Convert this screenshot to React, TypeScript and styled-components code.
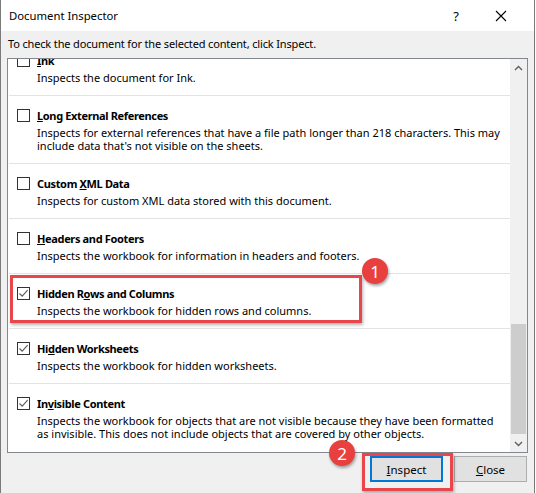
import React from 'react';
import styled, { createGlobalStyle } from 'styled-components';

const GlobalStyle = createGlobalStyle`
  html, body {
    margin: 0;
    padding: 0;
    background: #ffffff;
  }
  body {
    font-family: "Noto Sans", "DejaVu Sans", sans-serif;
    font-size: 11px;
    color: #000;
  }
`;

type InspectItem = {
  title: string;
  mnemonic: number;
  lines: string[];
  checked: boolean;
};

const items: InspectItem[] = [
  { title: 'Ink', mnemonic: 0, lines: ['Inspects the document for Ink.'], checked: false },
  {
    title: 'Long External References',
    mnemonic: 0,
    lines: [
      'Inspects for external references that have a file path longer than 218 characters. This may',
      "include data that's not visible on the sheets.",
    ],
    checked: false,
  },
  { title: 'Custom XML Data', mnemonic: 7, lines: ['Inspects for custom XML data stored with this document.'], checked: false },
  { title: 'Headers and Footers', mnemonic: 0, lines: ['Inspects the workbook for information in headers and footers.'], checked: false },
  { title: 'Hidden Rows and Columns', mnemonic: 8, lines: ['Inspects the workbook for hidden rows and columns.'], checked: true },
  { title: 'Hidden Worksheets', mnemonic: 2, lines: ['Inspects the workbook for hidden worksheets.'], checked: true },
  {
    title: 'Invisible Content',
    mnemonic: 2,
    lines: [
      'Inspects the workbook for objects that are not visible because they have been formatted',
      'as invisible. This does not include objects that are covered by other objects.',
    ],
    checked: true,
  },
];

const Mnemonic: React.FC<{ text: string; at: number }> = ({ text, at }) => (
  <>
    {text.slice(0, at)}
    <u>{text.charAt(at)}</u>
    {text.slice(at + 1)}
  </>
);

const App: React.FC = () => {
  return (
    <>
      <GlobalStyle />
      <Window>
        <TitleBar>
          <TitleText>Document Inspector</TitleText>
          <TitleButtons>
            <HelpGlyph>?</HelpGlyph>
            <svg width="12" height="12" viewBox="0 0 12 12">
              <path d="M1 1 L11 11 M11 1 L1 11" stroke="#000" strokeWidth="1.1" fill="none" />
            </svg>
          </TitleButtons>
        </TitleBar>
        <Body>
          <Hint>To check the document for the selected content, click Inspect.</Hint>
          <ListBox>
            <ListViewport>
              <ListContent>
                {items.map((item, i) => (
                  <Row key={item.title} $last={i === items.length - 1}>
                    <TitleLine>
                      <CheckBox>
                        {item.checked && (
                          <svg width="11" height="11" viewBox="0 0 11 11">
                            <path d="M1.5 5.5 L4.2 8.2 L9.6 2.2" stroke="#5e5e5e" strokeWidth="1.2" fill="none" />
                          </svg>
                        )}
                      </CheckBox>
                      <ItemTitle>
                        <Mnemonic text={item.title} at={item.mnemonic} />
                      </ItemTitle>
                    </TitleLine>
                    <Desc>
                      {item.lines.map((l) => (
                        <div key={l}>{l}</div>
                      ))}
                    </Desc>
                  </Row>
                ))}
              </ListContent>
            </ListViewport>
            <ScrollBar>
              <ArrowBox>
                <svg width="9" height="6" viewBox="0 0 9 6">
                  <path d="M1 5 L4.5 1.5 L8 5" stroke="#606060" strokeWidth="1.4" fill="none" />
                </svg>
              </ArrowBox>
              <Track>
                <Thumb />
              </Track>
              <ArrowBox>
                <svg width="9" height="6" viewBox="0 0 9 6">
                  <path d="M1 1 L4.5 4.5 L8 1" stroke="#606060" strokeWidth="1.4" fill="none" />
                </svg>
              </ArrowBox>
            </ScrollBar>
          </ListBox>
          <Footer>
            <Button $focused>
              <u>I</u>nspect
            </Button>
            <Button>
              <u>C</u>lose
            </Button>
          </Footer>
        </Body>

        <Highlight $x={9} $y={275} $w={352} $h={48} />
        <Badge $x={361} $y={258}>1</Badge>
        <Highlight $x={361} $y={453} $w={91} $h={38} />
        <Badge $x={328} $y={440}>2</Badge>
      </Window>
    </>
  );
};

export default App;

const Window = styled.div`
  position: relative;
  width: 535px;
  height: 493px;
  box-sizing: border-box;
  border-left: 1px solid #7a7a7a;
  border-right: 1px solid #7a7a7a;
  background: #f0f0f0;
  overflow: hidden;
`;

const TitleBar = styled.div`
  height: 31px;
  background: #ffffff;
  display: flex;
  align-items: center;
  justify-content: space-between;
  padding: 0 27px 0 8px;
`;

const TitleText = styled.div`
  font-size: 11.3px;
  padding-bottom: 1px;
`;

const TitleButtons = styled.div`
  display: flex;
  align-items: center;
  gap: 36px;
`;

const HelpGlyph = styled.span`
  font-size: 13px;
`;

const Body = styled.div`
  padding: 5px 6px 0 6px;
`;

const Hint = styled.div`
  line-height: 16px;
  padding-left: 1px;
  letter-spacing: -0.15px;
`;

const ListBox = styled.div`
  margin-top: 6px;
  height: 395px;
  box-sizing: border-box;
  border: 1px solid #828790;
  background: #ffffff;
  display: flex;
`;

const ListViewport = styled.div`
  flex: 1;
  overflow: hidden;
`;

const ListContent = styled.div`
  margin-top: -18px;
`;

const Row = styled.div<{ $last?: boolean }>`
  margin: 0 0 0 1px;
  padding: 11px 0 11px 0;
  border-bottom: ${(p) => (p.$last ? 'none' : '1px solid #e3e3e3')};
`;

const TitleLine = styled.div`
  display: flex;
  align-items: center;
  height: 16px;
  padding-left: 8px;
`;

const CheckBox = styled.div`
  width: 13px;
  height: 13px;
  box-sizing: border-box;
  border: 1px solid #333333;
  background: #ffffff;
  display: flex;
  align-items: center;
  justify-content: center;
  margin-right: 7px;
`;

const ItemTitle = styled.div`
  font-weight: 700;
  font-size: 11px;
  letter-spacing: -0.35px;
`;

const Desc = styled.div`
  margin-top: 3px;
  padding-left: 28px;
  line-height: 13px;
  white-space: nowrap;
`;

const ScrollBar = styled.div`
  width: 17px;
  background: #f0f0f0;
  display: flex;
  flex-direction: column;
`;

const ArrowBox = styled.div`
  height: 17px;
  display: flex;
  align-items: center;
  justify-content: center;
`;

const Track = styled.div`
  flex: 1;
  display: flex;
  flex-direction: column;
  justify-content: flex-end;
  padding: 0 1px 0 1px;
`;

const Thumb = styled.div`
  height: 110px;
  background: #cdcdcd;
  margin-bottom: 1px;
`;

const Footer = styled.div`
  display: flex;
  justify-content: flex-end;
  gap: 11px;
  padding: 3px 1px 0 0;
`;

const Button = styled.button<{ $focused?: boolean }>`
  width: 73px;
  height: 26px;
  box-sizing: border-box;
  font-family: inherit;
  font-size: 11.5px;
  color: #000;
  background: #e1e1e1;
  border: ${(p) => (p.$focused ? '2px solid #0078d7' : '1px solid #adadad')};
  padding: 0;
  margin: 0;
`;

const Highlight = styled.div<{ $x: number; $y: number; $w: number; $h: number }>`
  position: absolute;
  left: ${(p) => p.$x}px;
  top: ${(p) => p.$y}px;
  width: ${(p) => p.$w}px;
  height: ${(p) => p.$h}px;
  box-sizing: border-box;
  border: 3px solid #e8464a;
  box-shadow: 1px 2px 3px rgba(0, 0, 0, 0.3);
  pointer-events: none;
`;

const Badge = styled.div<{ $x: number; $y: number }>`
  position: absolute;
  left: ${(p) => p.$x}px;
  top: ${(p) => p.$y}px;
  width: 26px;
  height: 26px;
  border-radius: 50%;
  background: #e8403f;
  color: #ffffff;
  font-size: 17px;
  display: flex;
  align-items: center;
  justify-content: center;
  box-shadow: 1px 2px 3px rgba(0, 0, 0, 0.35);
`;
